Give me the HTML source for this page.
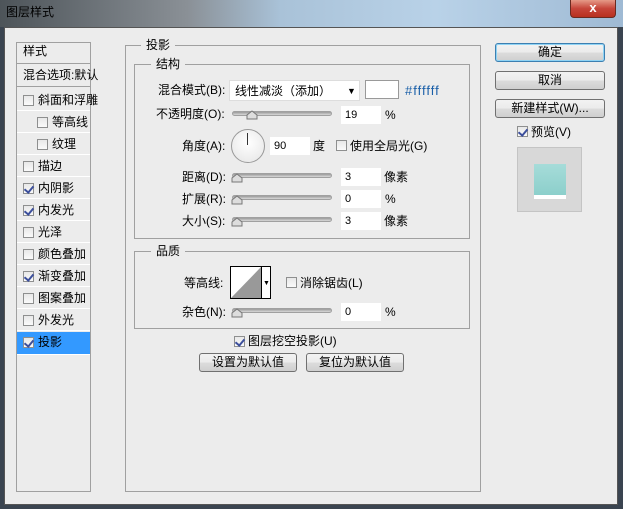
<!DOCTYPE html>
<html><head><meta charset="utf-8"><style>
*{margin:0;padding:0;box-sizing:border-box}
body{width:623px;height:509px;overflow:hidden;position:relative;background:#3a4450;font-family:"Liberation Sans","Noto Sans CJK SC",sans-serif;font-size:12px;color:#000}
.a{position:absolute}
.t{position:absolute;white-space:nowrap;line-height:14px}
.row{position:absolute;left:17px;width:73px;height:21px;border-bottom:1px solid #fff;}
.sep{position:absolute;left:17px;width:73px;height:1px;background:#fff}
.cb{position:absolute;width:11px;height:11px;border:1px solid #8e8f8f;background:linear-gradient(#e8e8e8,#fafafa)}
.cb.on::after{content:"";position:absolute;left:2px;top:0px;width:4px;height:7px;border:solid #3c4f9c;border-width:0 2px 2px 0;transform:rotate(40deg)}
.inp{position:absolute;background:#fff;height:18px;width:40px;padding:2px 4px;font-size:11px;line-height:14px}
.sl{position:absolute;height:5px;border-radius:3px;background:linear-gradient(#9a9a9a,#d8d8d8);border:1px solid #a0a0a0}
.th{position:absolute;width:10px;height:8px}
.btn{position:absolute;height:19px;border:1px solid #707070;border-radius:3px;background:linear-gradient(#f2f2f2 0,#ebebeb 50%,#dcdcdc 51%,#cfcfcf);text-align:center;line-height:17px;font-size:12px}
</style></head><body>
<div class="a" style="left:0;top:0;width:623px;height:27px;background:linear-gradient(90deg,#4d5459 0,#8a9096 30%,#a9c2d8 45%,#b9d2e8 70%,#9fbad4 100%)"></div>
<div class="t" style="left:6px;top:5px;font-size:12px;color:#000">图层样式</div>
<div class="a" style="left:570px;top:0;width:46px;height:18px;border:1px solid #6a2a20;border-top:none;border-radius:0 0 4px 4px;background:linear-gradient(#e59a88,#c6453a 50%,#b8301f);color:#fff;font-weight:bold;text-align:center;line-height:16px;font-size:13px">x</div>
<div class="a" style="left:4px;top:27px;width:614px;height:478px;background:#ececec;border:1px solid #555"></div>

<div class="a" style="left:16px;top:42px;width:75px;height:450px;border:1px solid #a0a0a0;background:#ececec"></div>
<div class="row" style="top:43px;height:21px;border-bottom:1px solid #a0a0a0"></div>
<div class="t" style="left:23px;top:44px">样式</div>
<div class="row" style="top:65px;height:22px;border-bottom:1px solid #a0a0a0"></div>
<div class="t" style="left:23px;top:68px">混合选项:默认</div>
<div class="sep" style="top:110px"></div><div class="sep" style="top:132px"></div><div class="sep" style="top:154px"></div>
<div class="sep" style="top:176px"></div><div class="sep" style="top:198px"></div><div class="sep" style="top:220px"></div>
<div class="sep" style="top:242px"></div><div class="sep" style="top:264px"></div><div class="sep" style="top:286px"></div>
<div class="sep" style="top:308px"></div><div class="sep" style="top:330px"></div><div class="sep" style="top:354px"></div>
<div class="cb" style="left:23px;top:95px"></div><div class="t" style="left:38px;top:93px">斜面和浮雕</div>
<div class="cb" style="left:37px;top:117px"></div><div class="t" style="left:52px;top:115px">等高线</div>
<div class="cb" style="left:37px;top:139px"></div><div class="t" style="left:52px;top:137px">纹理</div>
<div class="cb" style="left:23px;top:161px"></div><div class="t" style="left:38px;top:159px">描边</div>
<div class="cb on" style="left:23px;top:183px"></div><div class="t" style="left:38px;top:181px">内阴影</div>
<div class="cb on" style="left:23px;top:205px"></div><div class="t" style="left:38px;top:203px">内发光</div>
<div class="cb" style="left:23px;top:227px"></div><div class="t" style="left:38px;top:225px">光泽</div>
<div class="cb" style="left:23px;top:249px"></div><div class="t" style="left:38px;top:247px">颜色叠加</div>
<div class="cb on" style="left:23px;top:271px"></div><div class="t" style="left:38px;top:269px">渐变叠加</div>
<div class="cb" style="left:23px;top:293px"></div><div class="t" style="left:38px;top:291px">图案叠加</div>
<div class="cb" style="left:23px;top:315px"></div><div class="t" style="left:38px;top:313px">外发光</div>
<div class="a" style="left:17px;top:332px;width:73px;height:22px;background:#3399ff"></div>
<div class="cb on" style="left:23px;top:337px"></div><div class="t" style="left:38px;top:335px">投影</div>

<div class="a" style="left:125px;top:45px;width:356px;height:447px;border:1px solid #a0a0a0"></div>
<div class="t" style="left:141px;top:38px;background:#ececec;padding:0 5px">投影</div>
<div class="a" style="left:134px;top:64px;width:336px;height:175px;border:1px solid #a0a0a0"></div>
<div class="t" style="left:151px;top:57px;background:#ececec;padding:0 5px">结构</div>
<div class="t" style="left:158px;top:83px">混合模式(B):</div>
<div class="a" style="left:229px;top:80px;width:131px;height:21px;background:#fff;border:1px solid #ddd"></div>
<div class="t" style="left:235px;top:84px">线性减淡（添加）</div>
<div class="t" style="left:347px;top:84px;font-size:9px">▼</div>
<div class="a" style="left:365px;top:80px;width:34px;height:19px;background:#fff;border:1px solid #999"></div>
<div class="t" style="left:405px;top:84px;color:#1a5fa8;font-size:13px;letter-spacing:1px">#ffffff</div>
<div class="t" style="left:156px;top:107px">不透明度(O):</div>
<div class="sl" style="left:232px;top:111px;width:100px"></div>
<svg class="th" style="left:246px;top:110px;width:12px;height:10px"><path d="M1 9 L1 5 L6 1 L11 5 L11 9Z" fill="#ddd" stroke="#777"/></svg>
<div class="inp" style="left:341px;top:106px">19</div><div class="t" style="left:385px;top:108px">%</div>
<div class="t" style="left:182px;top:139px">角度(A):</div>
<div class="a" style="left:231px;top:129px;width:34px;height:34px;border-radius:50%;border:1px solid #999;background:radial-gradient(circle at 50% 40%,#fff,#e4e4e4)"></div>
<div class="a" style="left:247px;top:133px;width:1px;height:12px;background:#333"></div>
<div class="inp" style="left:270px;top:137px">90</div><div class="t" style="left:313px;top:139px">度</div>
<div class="cb" style="left:336px;top:140px"></div><div class="t" style="left:350px;top:139px">使用全局光(G)</div>
<div class="t" style="left:182px;top:170px">距离(D):</div>
<div class="sl" style="left:232px;top:173px;width:100px"></div>
<svg class="th" style="left:231px;top:173px;width:12px;height:10px"><path d="M1 9 L1 5 L6 1 L11 5 L11 9Z" fill="#ddd" stroke="#777"/></svg>
<div class="inp" style="left:341px;top:168px">3</div><div class="t" style="left:384px;top:170px">像素</div>
<div class="t" style="left:182px;top:192px">扩展(R):</div>
<div class="sl" style="left:232px;top:195px;width:100px"></div>
<svg class="th" style="left:231px;top:195px;width:12px;height:10px"><path d="M1 9 L1 5 L6 1 L11 5 L11 9Z" fill="#ddd" stroke="#777"/></svg>
<div class="inp" style="left:341px;top:190px">0</div><div class="t" style="left:385px;top:192px">%</div>
<div class="t" style="left:182px;top:214px">大小(S):</div>
<div class="sl" style="left:232px;top:217px;width:100px"></div>
<svg class="th" style="left:231px;top:217px;width:12px;height:10px"><path d="M1 9 L1 5 L6 1 L11 5 L11 9Z" fill="#ddd" stroke="#777"/></svg>
<div class="inp" style="left:341px;top:212px">3</div><div class="t" style="left:384px;top:214px">像素</div>

<div class="a" style="left:134px;top:251px;width:336px;height:78px;border:1px solid #a0a0a0"></div>
<div class="t" style="left:151px;top:244px;background:#ececec;padding:0 5px">品质</div>
<div class="t" style="left:184px;top:276px">等高线:</div>
<div class="a" style="left:230px;top:266px;width:41px;height:33px;border:1px solid #000;background:#fff"></div>
<svg class="a" style="left:231px;top:267px" width="30" height="31"><path d="M0 31 L30 0 L30 31Z" fill="#999"/></svg>
<div class="a" style="left:261px;top:267px;width:1px;height:31px;background:#000"></div>
<div class="t" style="left:263px;top:277px;font-size:7px">▼</div>
<div class="cb" style="left:286px;top:277px"></div><div class="t" style="left:300px;top:276px">消除锯齿(L)</div>
<div class="t" style="left:182px;top:305px">杂色(N):</div>
<div class="sl" style="left:232px;top:308px;width:100px"></div>
<svg class="th" style="left:231px;top:308px;width:12px;height:10px"><path d="M1 9 L1 5 L6 1 L11 5 L11 9Z" fill="#ddd" stroke="#777"/></svg>
<div class="inp" style="left:341px;top:303px">0</div><div class="t" style="left:385px;top:305px">%</div>

<div class="cb on" style="left:234px;top:336px"></div><div class="t" style="left:248px;top:334px">图层挖空投影(U)</div>
<div class="btn" style="left:199px;top:353px;width:98px">设置为默认值</div>
<div class="btn" style="left:306px;top:353px;width:98px">复位为默认值</div>

<div class="btn" style="left:495px;top:43px;width:110px;border-color:#3c7fb1;box-shadow:inset 0 0 0 1px #8fd3f4">确定</div>
<div class="btn" style="left:495px;top:71px;width:110px">取消</div>
<div class="btn" style="left:495px;top:99px;width:110px">新建样式(W)...</div>
<div class="cb on" style="left:517px;top:126px"></div><div class="t" style="left:531px;top:125px">预览(V)</div>
<div class="a" style="left:517px;top:147px;width:65px;height:65px;background:#d8d8d8;border:1px solid #c4c4c4"></div>
<div class="a" style="left:534px;top:164px;width:32px;height:35px;background:#fff"></div>
<div class="a" style="left:534px;top:164px;width:32px;height:31px;background:linear-gradient(#a6dcd9,#8ccfcb)"></div>
</body></html>
